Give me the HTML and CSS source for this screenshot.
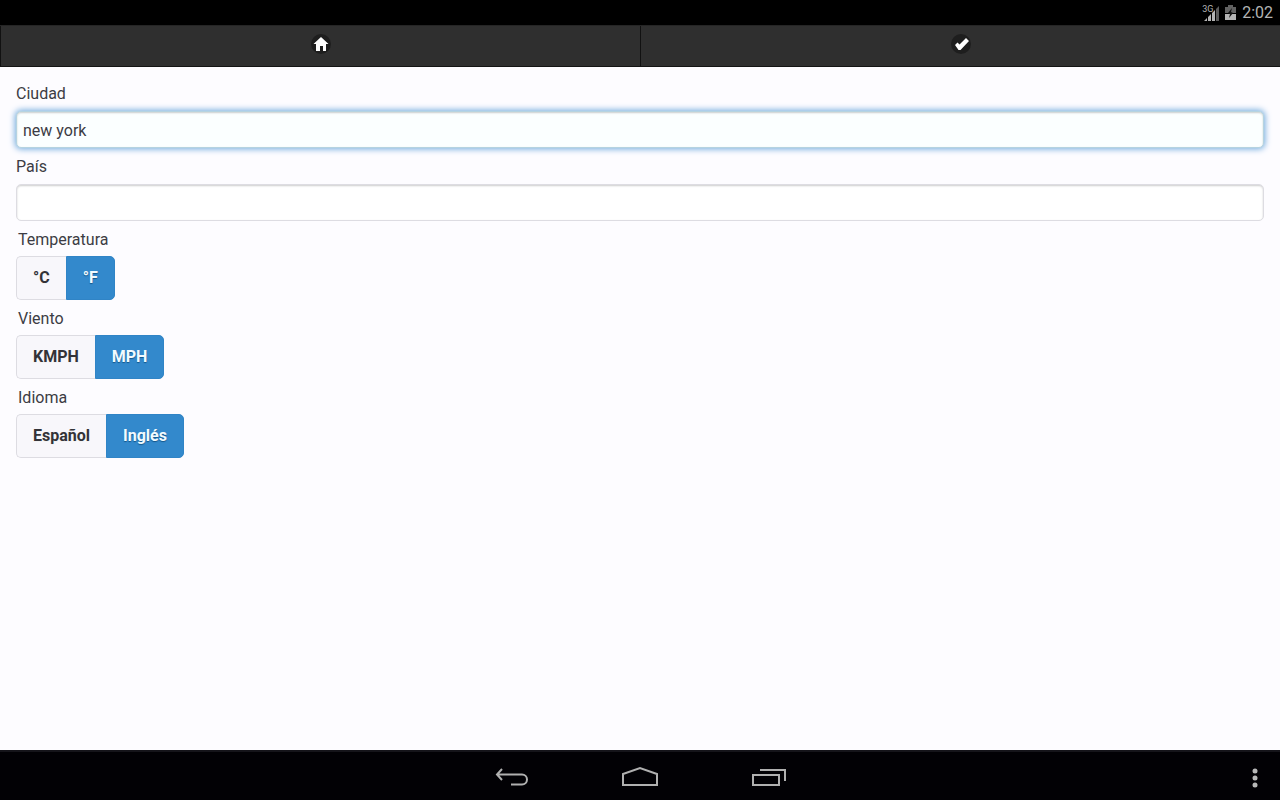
FILE: index.html
```html
<!DOCTYPE html>
<html lang="es">
<head>
  <meta charset="UTF-8">
  <meta name="viewport" content="width=device-width, initial-scale=1.0">
  <title>Clima</title>
  <link rel="stylesheet" href="styles.css">
</head>
<body>
  <div class="status-bar">
    <div class="signal">
      <span class="network">3G</span>
      <svg width="17" height="16" viewBox="0 0 17 16" aria-hidden="true">
        <path d="M2 16l3-3v3zM6 16v-4l3-3v7zM10 16V8l3-3v11z" fill="#b4b4b4"/>
        <path d="M14 16V4l3-3v15z" fill="#5a5a5a"/>
      </svg>
    </div>
    <svg class="battery" width="11" height="15" viewBox="0 0 11 15" aria-hidden="true">
      <path d="M3 0h5v2h3v6H0V2h3z" fill="#626262"/>
      <path d="M0 9h11v6H0z" fill="#b4b4b4"/>
      <path d="M7 3L3 8l2 1-1 4 4-5-2-1z" fill="#111"/>
    </svg>
    <span class="clock">2:02</span>
  </div>

  <nav class="navbar">
    <a class="nav-item" href="#inicio" aria-label="Inicio">
      <span class="nav-icon">
        <svg width="20" height="20" viewBox="0 0 20 20" aria-hidden="true">
          <path d="M10 3l7.500 7H15v7h-3v-5H9v5H5v-7H2.500z" fill="#fff"/>
        </svg>
      </span>
    </a>
    <a class="nav-item" href="#guardar" aria-label="Guardar">
      <span class="nav-icon">
        <svg width="20" height="20" viewBox="0 0 20 20" aria-hidden="true">
          <path d="M4 11l2.500-2.500 2 2L15 4l3 3L9.500 16h-2z" fill="#fff"/>
        </svg>
      </span>
    </a>
  </nav>

  <form class="content">
    <div class="field">
      <label for="ciudad">Ciudad</label>
      <input class="text-input focus" type="text" id="ciudad" value="new york">
    </div>
    <div class="field">
      <label for="pais">País</label>
      <input class="text-input" type="text" id="pais">
    </div>

    <fieldset class="group">
      <legend>Temperatura</legend>
      <div class="options">
        <input type="radio" name="temperatura" id="celsius">
        <label for="celsius">°C</label>
        <input type="radio" name="temperatura" id="fahrenheit" checked>
        <label for="fahrenheit">°F</label>
      </div>
    </fieldset>
    <fieldset class="group">
      <legend>Viento</legend>
      <div class="options">
        <input type="radio" name="viento" id="kmph">
        <label for="kmph">KMPH</label>
        <input type="radio" name="viento" id="mph" checked>
        <label for="mph">MPH</label>
      </div>
    </fieldset>
    <fieldset class="group">
      <legend>Idioma</legend>
      <div class="options">
        <input type="radio" name="idioma" id="espanol">
        <label for="espanol">Español</label>
        <input type="radio" name="idioma" id="ingles" checked>
        <label for="ingles">Inglés</label>
      </div>
    </fieldset>
  </form>

  <div class="system-bar">
    <div class="system-buttons">
      <button type="button" aria-label="Atrás">
        <svg width="36" height="24" viewBox="0 0 36 24" aria-hidden="true">
          <path d="M8 3L3 8.500l5 5.500M3 8.500h25a4.500 4.500 0 0 1 0 10H17" fill="none" stroke="#b0b0b0" stroke-width="2"/>
        </svg>
      </button>
      <button type="button" aria-label="Pantalla principal">
        <svg width="36" height="24" viewBox="0 0 36 24" aria-hidden="true">
          <path d="M1 19V8l17-6 17 6v11z" fill="none" stroke="#b0b0b0" stroke-width="2"/>
        </svg>
      </button>
      <button type="button" aria-label="Recientes">
        <svg width="36" height="24" viewBox="0 0 36 24" aria-hidden="true">
          <path d="M3 9h26v10H3zM10 4h25v11" fill="none" stroke="#b0b0b0" stroke-width="2"/>
        </svg>
      </button>
    </div>
    <button class="menu" type="button" aria-label="Menú">
      <svg width="6" height="20" viewBox="0 0 6 20" aria-hidden="true">
        <circle cx="3" cy="3" r="2.500" fill="#b8b8b8"/>
        <circle cx="3" cy="10" r="2.500" fill="#b8b8b8"/>
        <circle cx="3" cy="17" r="2.500" fill="#b8b8b8"/>
      </svg>
    </button>
  </div>
</body>
</html>
```
FILE: styles.css
```css
* {
  margin: 0;
  padding: 0;
  box-sizing: border-box;
}

body {
  font-family: Roboto, sans-serif;
  font-size: 16px;
  line-height: 22px;
  color: #3c3c44;
  background: #fdfcff;
  min-height: 100vh;
  display: flex;
  flex-direction: column;
}

svg {
  display: block;
}

/* Barra de estado */
.status-bar {
  background: #000;
  color: #b4b4b4;
  height: 25px;
  padding: 0 7px;
  display: flex;
  justify-content: flex-end;
  align-items: center;
  gap: 6px;
}

.signal {
  position: relative;
}

.network {
  position: absolute;
  top: 0;
  left: 0;
  font-size: 9px;
  line-height: 8px;
}

/* Navegación */
.navbar {
  display: flex;
  height: 42px;
  background: #2f2f2f;
  border-top: 1px solid #252525;
  border-bottom: 1px solid #141414;
}

.nav-item {
  flex: 1;
  display: flex;
  justify-content: center;
  padding-top: 8px;
  border-left: 1px solid #111;
}

.nav-icon {
  width: 20px;
  height: 20px;
  border-radius: 50%;
  background: #1e1e1e;
}

/* Formulario */
.content {
  flex: 1;
  padding: 16px;
  display: flex;
  flex-direction: column;
  gap: 8px;
}

.field {
  display: flex;
  flex-direction: column;
  gap: 6px;
}

.text-input {
  width: 100%;
  height: 37px;
  padding: 2px 6px 0;
  font: inherit;
  color: inherit;
  background: #fff;
  border: 1px solid #dddce2;
  border-radius: 5px;
  box-shadow: inset 0 1px 2px rgba(0, 0, 0, 0.2);
  outline: none;
}

.text-input.focus,
.text-input:focus {
  background: #fbffff;
  border-color: #b5d3e0;
  box-shadow: inset 0 1px 2px rgba(0, 0, 0, 0.2), 0 0 6px 1px #6fa9dc;
}

.group {
  border: none;
}

.group legend {
  padding: 0 2px;
  margin-bottom: 5px;
}

.options {
  display: flex;
  position: relative;
}

.options input {
  position: absolute;
  opacity: 0;
}

.options label {
  height: 44px;
  padding: 0 16px;
  line-height: 42px;
  font-weight: bold;
  color: #333338;
  background: #f8f7fb;
  border: 1px solid #dddce2;
  border-right: none;
  border-radius: 5px 0 0 5px;
  text-shadow: 0 1px 0 #f3f3f3;
  cursor: pointer;
}

.options label:last-child {
  border-right: 1px solid #dddce2;
  border-radius: 0 5px 5px 0;
}

.options input:checked + label {
  color: #f2fbff;
  background: #3389cc;
  border-color: #3084c6;
  text-shadow: 0 1px 1px #14568a;
}

.options input:focus-visible + label {
  box-shadow: 0 0 6px #6fa9dc;
}

/* Barra del sistema */
.system-bar {
  height: 50px;
  padding-top: 3px;
  background: #020105;
  border-top: 2px solid #15141a;
  display: grid;
  grid-template-columns: 1fr auto 1fr;
  align-items: center;
}

.system-bar button {
  background: none;
  border: none;
  cursor: pointer;
}

.system-buttons {
  grid-column: 2;
  display: flex;
  gap: 92px;
}

.menu {
  justify-self: end;
  margin-right: 22px;
}
```
